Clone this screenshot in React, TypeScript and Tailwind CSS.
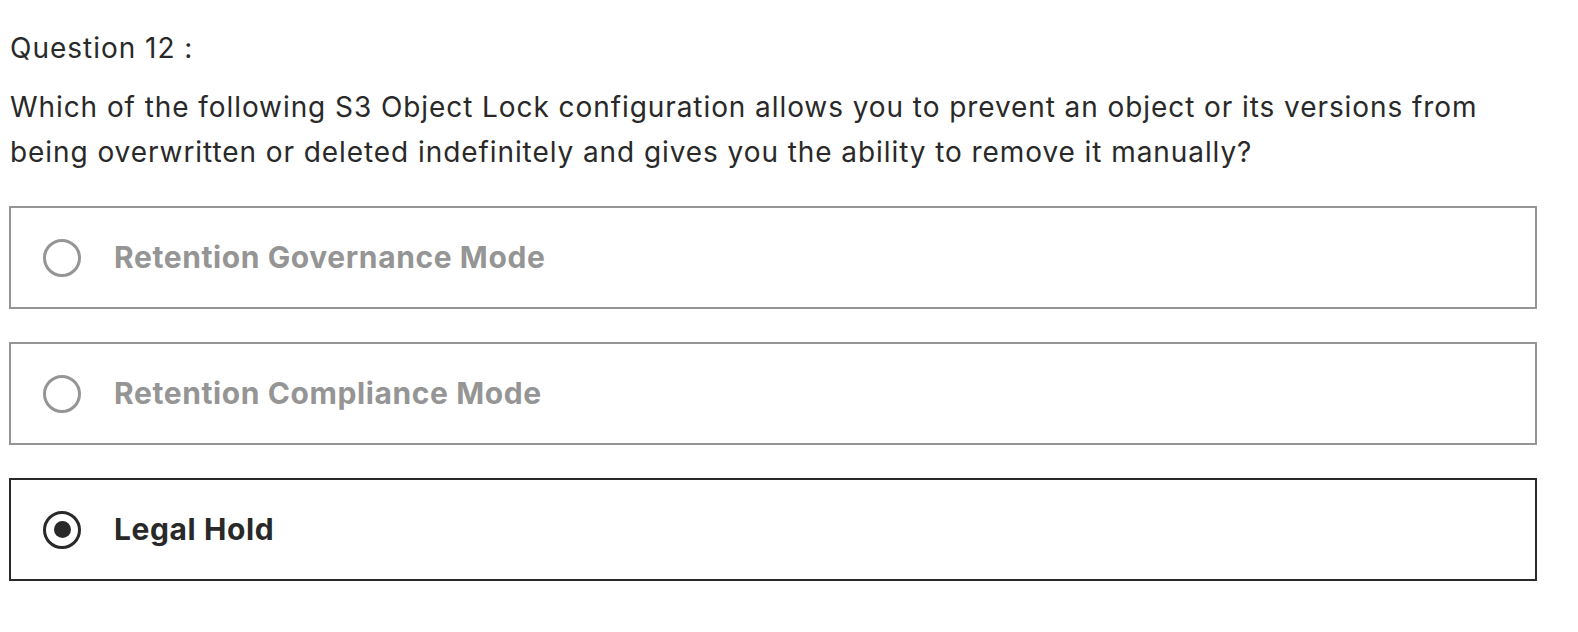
import React from "react";

type Option = { label: string; selected?: boolean };

const options: Option[] = [
  { label: "Retention Governance Mode" },
  { label: "Retention Compliance Mode" },
  { label: "Legal Hold", selected: true },
];

function Radio({ selected }: { selected?: boolean }) {
  if (selected) {
    return (
      <div className="w-[38px] h-[38px] rounded-full border-[3px] border-[#292929] flex items-center justify-center shrink-0">
        <div className="w-[17px] h-[17px] rounded-full bg-[#292929]"></div>
      </div>
    );
  }
  return <div className="w-[38px] h-[38px] rounded-full border-[3px] border-[#959595] shrink-0"></div>;
}

export default function App() {
  return (
    <div
      className="w-[1578px] h-[632px] bg-white text-[#292929] pl-[9px] pr-[41px] pt-[25px]"
      style={{ fontFamily: "Inter, 'Noto Sans', sans-serif" }}
    >
      <p className="text-[28px] leading-[46px] tracking-[0.035em] pl-[1px]">Question 12 :</p>
      <p className="text-[28px] leading-[45px] tracking-[0.033em] mt-[14px] pl-[1px]">
        Which of the following S3 Object Lock configuration allows you to prevent an object or its versions from
        <br />
        being overwritten or deleted indefinitely and gives you the ability to remove it manually?
      </p>
      <div className="mt-[31px] flex flex-col gap-[33px]">
        {options.map((o) => (
          <div
            key={o.label}
            className={`h-[103px] border-2 flex items-center pl-[32px] gap-[33px] ${
              o.selected ? "border-[#292929]" : "border-[#959595]"
            }`}
          >
            <Radio selected={o.selected} />
            <span
              className={`text-[30px] font-bold tracking-[0.02em] ${o.selected ? "text-[#292929]" : "text-[#959595]"}`}
            >
              {o.label}
            </span>
          </div>
        ))}
      </div>
    </div>
  );
}
